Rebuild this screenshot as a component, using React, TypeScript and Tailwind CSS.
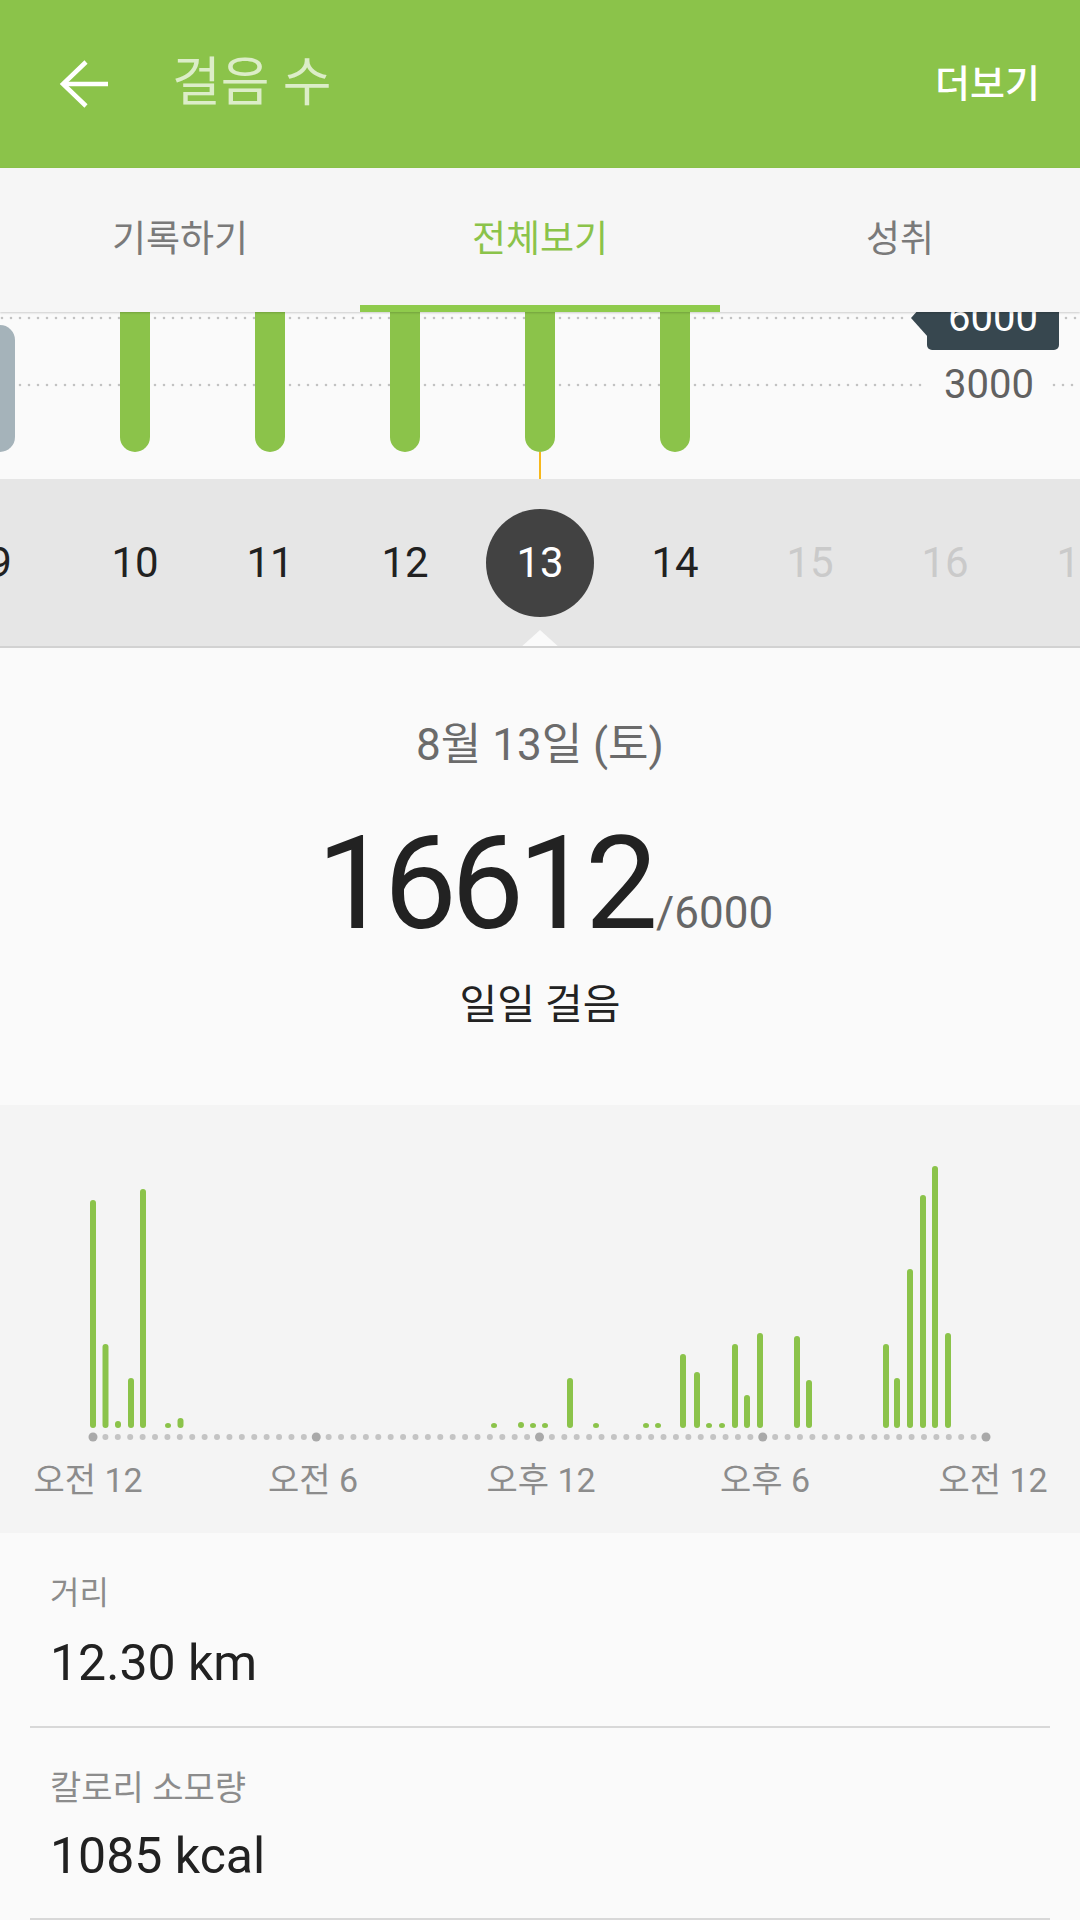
import React from 'react';

const topBars = [135, 270, 405, 540, 675];

const days = [
  { d: '9', state: 'past' },
  { d: '10', state: 'past' },
  { d: '11', state: 'past' },
  { d: '12', state: 'past' },
  { d: '13', state: 'active' },
  { d: '14', state: 'past' },
  { d: '15', state: 'future' },
  { d: '16', state: 'future' },
  { d: '17', state: 'future' },
];

// [x center, top y on the page]
const hourlyBars: [number, number][] = [
  [93, 1200], [105.5, 1344], [118, 1421], [131, 1378], [143, 1189], [168, 1423], [180.5, 1418],
  [494, 1423], [521, 1422], [533, 1423], [545, 1423], [570, 1378], [596, 1423],
  [646, 1423], [658, 1423], [683, 1354], [697, 1372], [709, 1423], [722, 1423],
  [735, 1344], [747, 1395], [760, 1333], [797, 1336], [809, 1380],
  [886, 1344], [897, 1378], [910, 1269], [923, 1195], [935, 1166], [948, 1333],
];

const hourLabels = [
  { x: 88, t: '오전 12' },
  { x: 313, t: '오전 6' },
  { x: 541, t: '오후 12' },
  { x: 765, t: '오후 6' },
  { x: 993, t: '오전 12' },
];

const font = { fontFamily: "Roboto, 'Noto Sans CJK KR', sans-serif" };

function HourlyChart() {
  const top = 1105;
  const dots = Array.from({ length: 73 }, (_, i) => i);
  return (
    <svg width="1080" height="428" viewBox="0 0 1080 428" className="block">
      {hourlyBars.map(([x, y], i) => (
        <rect key={i} x={x - 3} y={y - top} width="6" height={1428 - y} rx="3" fill="#8bc34a" />
      ))}
      {dots.map((i) => {
        const big = i % 18 === 0;
        return (
          <circle
            key={i}
            cx={93 + i * (893 / 72)}
            cy={332}
            r={big ? 4.5 : 3}
            fill={big ? '#a9a9a9' : '#c4c4c4'}
          />
        );
      })}
      {hourLabels.map((l) => (
        <text
          key={l.x}
          x={l.x}
          y={387}
          textAnchor="middle"
          fontSize="34"
          fill="#8c8c8c"
          style={font}
        >
          {l.t}
        </text>
      ))}
    </svg>
  );
}

export default function App() {
  return (
    <div className="w-[1080px] h-[1920px] overflow-hidden bg-[#fafafa]" style={font}>
      {/* Header */}
      <div className="h-[168px] bg-[#8bc34a] flex items-center pl-[58px] pr-[40px]">
        <svg width="52" height="48" viewBox="0 0 52 48" fill="none" stroke="#ffffff" strokeWidth="4.5">
          <path d="M50 24H5" />
          <path d="M28 2L5 24L28 46" />
        </svg>
        <span className="ml-[62px] text-[53px] text-[#dcedc8]">걸음 수</span>
        <span className="ml-auto text-[38px] font-medium text-white">더보기</span>
      </div>

      {/* Tabs */}
      <div className="relative z-10 h-[144px] bg-[#f6f6f6] flex shadow-[0_1px_2px_rgba(0,0,0,0.18)]">
        <div className="flex-1 flex items-center justify-center text-[37px] text-[#7a7a7a]">기록하기</div>
        <div className="flex-1 flex items-center justify-center text-[37px] text-[#8bc34a]">전체보기</div>
        <div className="flex-1 flex items-center justify-center text-[37px] text-[#7a7a7a]">성취</div>
        <div className="absolute bottom-0 left-[360px] w-[360px] h-[7px] bg-[#8fcb4c]" />
      </div>

      {/* Daily bars */}
      <div className="relative h-[167px] overflow-hidden bg-[#fafafa]">
        <svg width="1080" height="167" viewBox="0 0 1080 167" className="block">
          <line x1="2" y1="6" x2="905" y2="6" stroke="#c2c2c2" strokeWidth="2.6" strokeDasharray="0 9" strokeLinecap="round" />
          <line x1="1066" y1="6" x2="1080" y2="6" stroke="#c2c2c2" strokeWidth="2.6" strokeDasharray="0 9" strokeLinecap="round" />
          <line x1="2" y1="73" x2="925" y2="73" stroke="#c2c2c2" strokeWidth="2.6" strokeDasharray="0 9" strokeLinecap="round" />
          <line x1="1054" y1="73" x2="1080" y2="73" stroke="#c2c2c2" strokeWidth="2.6" strokeDasharray="0 9" strokeLinecap="round" />
          <rect x="-15" y="13" width="30" height="127" rx="15" fill="#a5b3ba" />
          {topBars.map((x) => (
            <rect key={x} x={x - 15} y="-20" width="30" height="160" rx="15" fill="#8bc34a" />
          ))}
          <line x1="540" y1="140" x2="540" y2="167" stroke="#f7b81c" strokeWidth="2" />
        </svg>
        <div className="absolute left-[911px] top-[-13px] w-0 h-0 border-r-[17px] border-r-[#37474f] border-y-[19px] border-y-transparent" />
        <div className="absolute left-[927px] top-[-26px] w-[132px] h-[64px] rounded-b-[5px] bg-[#37474f] flex items-center justify-center text-[40px] leading-[48px] text-white">
          6000
        </div>
        <div className="absolute left-[944px] top-[49px] text-[40px] leading-[48px] text-[#616161]">3000</div>
      </div>

      {/* Date strip */}
      <div className="relative h-[169px] bg-[#e6e6e6] border-b-2 border-[#d2d2d2] overflow-hidden">
        <div className="flex h-full items-center -ml-[67.5px]">
          {days.map((day) => (
            <div key={day.d} className="w-[135px] shrink-0 flex items-center justify-center">
              {day.state === 'active' ? (
                <div className="w-[108px] h-[108px] rounded-full bg-[#424242] flex items-center justify-center text-[42px] text-white">
                  {day.d}
                </div>
              ) : (
                <span
                  className={
                    day.state === 'future' ? 'text-[42px] text-[#cacaca]' : 'text-[42px] text-[#212121]'
                  }
                >
                  {day.d}
                </span>
              )}
            </div>
          ))}
        </div>
        <div className="absolute bottom-[-2px] left-[520px] w-0 h-0 border-x-[20px] border-x-transparent border-b-[18px] border-b-[#fafafa]" />
      </div>

      {/* Summary */}
      <div className="h-[457px] bg-[#fafafa] flex flex-col items-center pt-[70px]">
        <div className="h-[54px] leading-[54px] text-[44px] text-[#6b6b6b]">8월 13일 (토)</div>
        <div className="mt-[47px] h-[130px] flex items-baseline justify-center pl-[10px]">
          <span className="text-[130px] leading-none tracking-[-6px] text-[#222222]">16612</span>
          <span className="text-[44px] leading-none text-[#666666] ml-[4px]">/6000</span>
        </div>
        <div className="mt-[31px] h-[50px] leading-[50px] text-[41px] text-[#222222]">일일 걸음</div>
      </div>

      {/* Hourly chart */}
      <div className="h-[428px] bg-[#f4f4f4]">
        <HourlyChart />
      </div>

      {/* Details */}
      <div className="px-[30px] bg-[#fafafa]">
        <div className="border-b-2 border-[#d8d8d8] pl-[20px] pt-[40px] pb-[38px]">
          <div className="h-[40px] leading-[40px] text-[32px] text-[#8c8c8c]">거리</div>
          <div className="mt-[25px] text-[50px] leading-none text-[#212121]">12.30 km</div>
        </div>
        <div className="border-b-2 border-[#d8d8d8] pl-[20px] pt-[40px] pb-[37px]">
          <div className="h-[40px] leading-[40px] text-[34px] text-[#8c8c8c]">칼로리 소모량</div>
          <div className="mt-[23px] text-[50px] leading-none text-[#212121]">1085 kcal</div>
        </div>
      </div>
    </div>
  );
}
